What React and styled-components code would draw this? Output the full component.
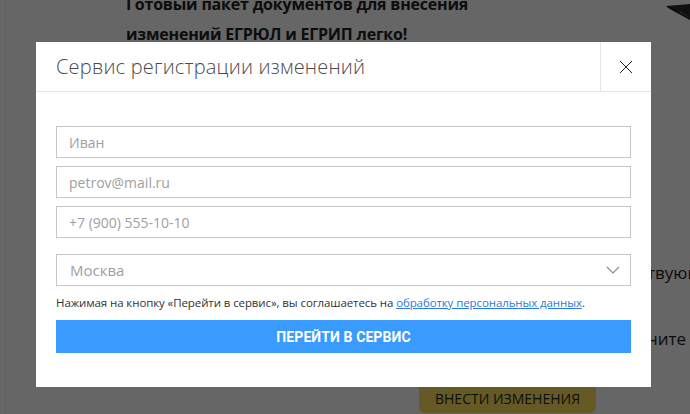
import React from 'react';
import styled, { createGlobalStyle } from 'styled-components';

const GlobalStyle = createGlobalStyle`
  html, body {
    margin: 0;
    padding: 0;
    height: 100%;
    overflow: hidden;
    background: #fff;
    font-family: "Open Sans", "Noto Sans", sans-serif;
  }
  * { box-sizing: border-box; }
`;

const Page = styled.div`
  width: 685px;
  height: 414px;
  overflow: hidden;
  background: #fff;
  border-left: 1px solid #f0f0f0;
  margin-left: 5px;
  display: flex;
  flex-direction: column;
`;

const Hero = styled.div`
  display: grid;
  grid-template-columns: 1fr 30px;
  height: 50px;
  padding-left: 120px;
`;

const HeroTitle = styled.h1`
  margin: -11px 0 0;
  font-size: 16px;
  font-weight: 700;
  line-height: 30px;
  color: #222;
  letter-spacing: -0.2px;
`;

const Laptop = styled.svg`
  display: block;
  margin-top: 4px;
`;

const Lower = styled.div`
  flex: 1;
  display: grid;
  grid-template-columns: 413px 177px 1fr;
`;

const SideText = styled.div`
  grid-column: 3;
  display: flex;
  flex-direction: column;
  gap: 43px;
  padding: 211px 0 0 51px;
  font-size: 17px;
  line-height: 23px;
  color: #222;
  white-space: nowrap;
`;

const YellowButton = styled.button`
  grid-column: 2;
  grid-row: 1;
  align-self: end;
  margin-bottom: 1px;
  height: 40px;
  border: none;
  border-radius: 6px;
  background: #fce15c;
  font-family: "Open Sans", sans-serif;
  font-size: 14px;
  color: #222;
  padding-top: 12px;
`;

const Overlay = styled.div`
  position: fixed;
  inset: 0;
  background: rgba(0, 0, 0, 0.6);
  padding: 42px 0 0 36px;
`;

const Modal = styled.div`
  width: 615px;
  height: 345px;
  background: #fff;
  display: flex;
  flex-direction: column;
`;

const Header = styled.div`
  display: flex;
  align-items: stretch;
  height: 50px;
  border-bottom: 1px solid #e5e5e5;
`;

const ModalTitle = styled.h2`
  flex: 1;
  margin: 0;
  padding: 0 0 0 20px;
  display: flex;
  align-items: center;
  font-size: 20px;
  font-weight: 300;
  color: #4a4a4a;
  letter-spacing: 0.2px;
`;

const CloseButton = styled.button`
  width: 51px;
  border: none;
  border-left: 1px solid #e5e5e5;
  background: transparent;
  display: flex;
  align-items: center;
  justify-content: center;
  padding: 0;
  cursor: pointer;
`;

const Form = styled.form`
  display: flex;
  flex-direction: column;
  padding: 34px 20px 0;
`;

const Field = styled.input`
  height: 32px;
  border: 1px solid #c6c6c6;
  padding: 0 12px;
  font-family: "Open Sans", sans-serif;
  font-size: 14px;
  color: #333;
  margin-bottom: ${({ $gap }) => $gap || 8}px;
  outline: none;
  &::placeholder { color: #a0a0a0; }
`;

const SelectBox = styled.div`
  height: 32px;
  border: 1px solid #c6c6c6;
  padding: 0 10px 0 13px;
  display: flex;
  align-items: center;
  justify-content: space-between;
  font-size: 15px;
  color: #a0a0a0;
`;

const Agreement = styled.p`
  margin: 9px 0 9px;
  font-size: 11.5px;
  line-height: 16px;
  color: #333;
  letter-spacing: -0.1px;
  a {
    color: #2a7ae2;
    text-decoration: underline;
  }
`;

const Submit = styled.button`
  height: 33px;
  border: none;
  background: #399bff;
  color: #fff;
  font-family: "Roboto", sans-serif;
  font-weight: 700;
  font-size: 14px;
  letter-spacing: 0.1px;
  text-transform: uppercase;
`;

export default function App() {
  return (
    <>
      <GlobalStyle />
      <Page>
        <Hero>
          <HeroTitle>
            Готовый пакет документов для внесения<br />изменений ЕГРЮЛ и ЕГРИП легко!
          </HeroTitle>
          <Laptop width="30" height="20" viewBox="0 0 30 20">
            <polygon points="6,2 30,0 30,14 20,8 10,5" fill="#2a2a2a" />
            <polygon points="6,2 10,5 30,16 30,14 12,4" fill="#111" />
          </Laptop>
        </Hero>
        <Lower>
          <YellowButton>ВНЕСТИ ИЗМЕНЕНИЯ</YellowButton>
          <SideText>
            <span>твующих</span>
            <span>ните</span>
          </SideText>
        </Lower>
      </Page>
      <Overlay>
        <Modal>
          <Header>
            <ModalTitle>Сервис регистрации изменений</ModalTitle>
            <CloseButton aria-label="Закрыть">
              <svg width="14" height="14" viewBox="0 0 14 14">
                <path d="M1 1 L13 13 M13 1 L1 13" stroke="#222" strokeWidth="1" />
              </svg>
            </CloseButton>
          </Header>
          <Form>
            <Field placeholder="Иван" />
            <Field placeholder="petrov@mail.ru" />
            <Field placeholder="+7 (900) 555-10-10" $gap={16} />
            <SelectBox>
              <span>Москва</span>
              <svg width="14" height="8" viewBox="0 0 14 8">
                <path d="M1 1 L7 7 L13 1" fill="none" stroke="#888" strokeWidth="1.1" />
              </svg>
            </SelectBox>
            <Agreement>
              Нажимая на кнопку «Перейти в сервис», вы соглашаетесь на{' '}
              <a href="#">обработку персональных данных</a>.
            </Agreement>
            <Submit type="button">Перейти в сервис</Submit>
          </Form>
        </Modal>
      </Overlay>
    </>
  );
}
